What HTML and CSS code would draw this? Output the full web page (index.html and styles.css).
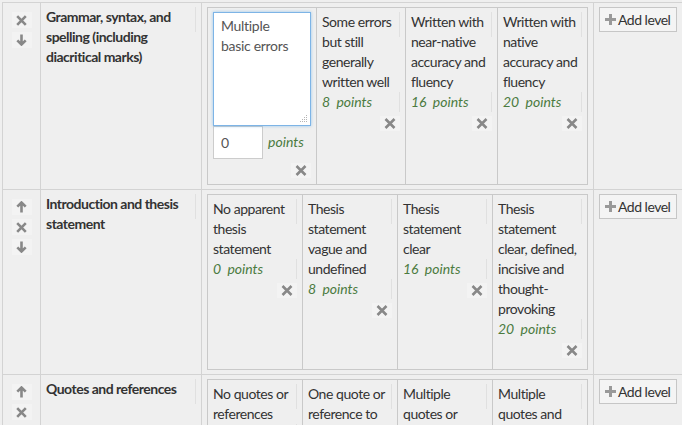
FILE: index.html
```html
<!DOCTYPE html>
<html lang="en">
<head>
<meta charset="utf-8">
<title>Rubric editor</title>
<link rel="stylesheet" href="styles.css">
</head>
<body>
<div class="criteria">

  <div class="criterion">
    <div class="controls">
      <span class="ibtn"><svg width="11" height="11" viewBox="0 0 11 11"><path d="M1.2 1.2L9.8 9.8M9.8 1.2L1.2 9.8" stroke="#888" stroke-width="2.6"/></svg></span>
      <span class="ibtn"><svg width="11" height="12" viewBox="0 0 11 12"><path d="M5.5 0.5V10.5M1.3 6.3L5.5 10.5L9.7 6.3" stroke="#888" stroke-width="2.6" fill="none"/></svg></span>
    </div>
    <div class="description"><div class="desc-text">Grammar, syntax, and spelling (including diacritical marks)</div></div>
    <div class="levels-cell">
      <div class="levels levels-first">
        <div class="level level-editing">
          <div class="def-wrap">
            <textarea class="def-input">Multiple basic errors</textarea>
            <svg class="grip" width="9" height="9" viewBox="0 0 9 9"><g fill="#b5b5b5"><rect x="7" y="1" width="1" height="1"/><rect x="5" y="3" width="1" height="1"/><rect x="7" y="3" width="1" height="1"/><rect x="3" y="5" width="1" height="1"/><rect x="5" y="5" width="1" height="1"/><rect x="7" y="5" width="1" height="1"/><rect x="1" y="7" width="1" height="1"/><rect x="3" y="7" width="1" height="1"/><rect x="5" y="7" width="1" height="1"/><rect x="7" y="7" width="1" height="1"/></g></svg>
          </div>
          <div class="score-edit"><input class="score-input" type="text" value="0"><span class="pts">points</span></div>
          <span class="del"><svg width="12" height="11" viewBox="0 0 12 11"><path d="M1.5 1L10.5 10M10.5 1L1.5 10" stroke="#888" stroke-width="2.6"/></svg></span>
        </div>
        <div class="level">
          <div class="definition">Some errors but still generally written well</div>
          <div class="score"><span class="num">8</span> points</div>
          <span class="del"><svg width="12" height="11" viewBox="0 0 12 11"><path d="M1.5 1L10.5 10M10.5 1L1.5 10" stroke="#888" stroke-width="2.6"/></svg></span>
        </div>
        <div class="level">
          <div class="definition">Written with near-native accuracy and fluency</div>
          <div class="score"><span class="num">16</span> points</div>
          <span class="del"><svg width="12" height="11" viewBox="0 0 12 11"><path d="M1.5 1L10.5 10M10.5 1L1.5 10" stroke="#888" stroke-width="2.6"/></svg></span>
        </div>
        <div class="level">
          <div class="definition">Written with native accuracy and fluency</div>
          <div class="score"><span class="num">20</span> points</div>
          <span class="del"><svg width="12" height="11" viewBox="0 0 12 11"><path d="M1.5 1L10.5 10M10.5 1L1.5 10" stroke="#888" stroke-width="2.6"/></svg></span>
        </div>
      </div>
    </div>
    <div class="addlevel-cell">
      <button class="addlevel" type="button"><svg width="11" height="11" viewBox="0 0 11 11"><path d="M5.5 0V11M0 5.5H11" stroke="#999" stroke-width="3"/></svg><span>Add level</span></button>
    </div>
  </div>

  <div class="criterion">
    <div class="controls">
      <span class="ibtn"><svg width="11" height="12" viewBox="0 0 11 12"><path d="M5.5 11.5V1.5M1.3 5.7L5.5 1.5L9.7 5.7" stroke="#888" stroke-width="2.6" fill="none"/></svg></span>
      <span class="ibtn"><svg width="11" height="11" viewBox="0 0 11 11"><path d="M1.2 1.2L9.8 9.8M9.8 1.2L1.2 9.8" stroke="#888" stroke-width="2.6"/></svg></span>
      <span class="ibtn"><svg width="11" height="12" viewBox="0 0 11 12"><path d="M5.5 0.5V10.5M1.3 6.3L5.5 10.5L9.7 6.3" stroke="#888" stroke-width="2.6" fill="none"/></svg></span>
    </div>
    <div class="description"><div class="desc-text">Introduction and thesis statement</div></div>
    <div class="levels-cell">
      <div class="levels levels-even">
        <div class="level">
          <div class="definition">No apparent thesis statement</div>
          <div class="score"><span class="num">0</span> points</div>
          <span class="del"><svg width="12" height="11" viewBox="0 0 12 11"><path d="M1.5 1L10.5 10M10.5 1L1.5 10" stroke="#888" stroke-width="2.6"/></svg></span>
        </div>
        <div class="level">
          <div class="definition">Thesis statement vague and undefined</div>
          <div class="score"><span class="num">8</span> points</div>
          <span class="del"><svg width="12" height="11" viewBox="0 0 12 11"><path d="M1.5 1L10.5 10M10.5 1L1.5 10" stroke="#888" stroke-width="2.6"/></svg></span>
        </div>
        <div class="level">
          <div class="definition">Thesis statement clear</div>
          <div class="score"><span class="num">16</span> points</div>
          <span class="del"><svg width="12" height="11" viewBox="0 0 12 11"><path d="M1.5 1L10.5 10M10.5 1L1.5 10" stroke="#888" stroke-width="2.6"/></svg></span>
        </div>
        <div class="level">
          <div class="definition">Thesis statement clear, defined, incisive and thought-provoking</div>
          <div class="score"><span class="num">20</span> points</div>
          <span class="del"><svg width="12" height="11" viewBox="0 0 12 11"><path d="M1.5 1L10.5 10M10.5 1L1.5 10" stroke="#888" stroke-width="2.6"/></svg></span>
        </div>
      </div>
    </div>
    <div class="addlevel-cell">
      <button class="addlevel" type="button"><svg width="11" height="11" viewBox="0 0 11 11"><path d="M5.5 0V11M0 5.5H11" stroke="#999" stroke-width="3"/></svg><span>Add level</span></button>
    </div>
  </div>

  <div class="criterion">
    <div class="controls">
      <span class="ibtn"><svg width="11" height="12" viewBox="0 0 11 12"><path d="M5.5 11.5V1.5M1.3 5.7L5.5 1.5L9.7 5.7" stroke="#888" stroke-width="2.6" fill="none"/></svg></span>
      <span class="ibtn"><svg width="11" height="11" viewBox="0 0 11 11"><path d="M1.2 1.2L9.8 9.8M9.8 1.2L1.2 9.8" stroke="#888" stroke-width="2.6"/></svg></span>
    </div>
    <div class="description"><div class="desc-text">Quotes and references</div></div>
    <div class="levels-cell">
      <div class="levels levels-even">
        <div class="level">
          <div class="definition">No quotes or references</div>
          <div class="score"><span class="num">0</span> points</div>
        </div>
        <div class="level">
          <div class="definition">One quote or reference to support argument</div>
          <div class="score"><span class="num">8</span> points</div>
        </div>
        <div class="level">
          <div class="definition">Multiple quotes or references</div>
          <div class="score"><span class="num">16</span> points</div>
        </div>
        <div class="level">
          <div class="definition">Multiple quotes and references, well integrated</div>
          <div class="score"><span class="num">20</span> points</div>
        </div>
      </div>
    </div>
    <div class="addlevel-cell">
      <button class="addlevel" type="button"><svg width="11" height="11" viewBox="0 0 11 11"><path d="M5.5 0V11M0 5.5H11" stroke="#999" stroke-width="3"/></svg><span>Add level</span></button>
    </div>
  </div>

</div>
</body>
</html>
```

FILE: styles.css
```css
* {
  box-sizing: border-box;
}

html, body {
  margin: 0;
  height: 100%;
  overflow: hidden;
  background: #efefef;
}

body {
  font-family: Lato, "Open Sans", sans-serif;
  font-size: 14px;
  line-height: 20px;
  letter-spacing: -0.45px;
  color: #333;
}

.criteria {
  margin: 2px 0 0 2px;
  width: 720px;
  border-top: 1px solid #d3d3d3;
  border-left: 1px solid #d3d3d3;
}

.criterion {
  display: grid;
  grid-template-columns: 38px 161px 392px 129px;
  border-bottom: 1px solid #d3d3d3;
}

.criterion > div {
  border-right: 1px solid #d3d3d3;
}

.controls {
  display: flex;
  flex-direction: column;
  align-items: center;
  gap: 4px;
  padding-top: 9px;
}

.ibtn {
  width: 20px;
  height: 16px;
  display: flex;
  align-items: center;
  justify-content: center;
  background: #f3f3f3;
}

.description {
  padding: 4px 5px;
}

.desc-text {
  position: relative;
  font-weight: bold;
  letter-spacing: -0.5px;
  padding-right: 6px;
}

.desc-text::after,
.definition::after,
.score::after {
  content: "";
  position: absolute;
  right: 0;
  top: 0;
  width: 1px;
  height: 25px;
  background: #e0e0e0;
}

.score::after {
  height: 20px;
}

.levels-cell {
  padding: 4px 5px;
}

.levels {
  display: grid;
  border: 1px solid #c9c9c9;
  width: 381px;
}

.levels-first {
  grid-template-columns: 109px 89px 92px 89px;
}

.levels-even {
  grid-template-columns: 95px 95px 95px 94px;
}

.level {
  display: flex;
  flex-direction: column;
  padding: 4px 5px 11px;
  border-right: 1px solid #c9c9c9;
}

.level:last-child {
  border-right: none;
}

.level-editing {
  padding-bottom: 6px;
}

.definition,
.score {
  position: relative;
}

.score {
  font-style: italic;
  color: #4b7b3f;
  letter-spacing: 0;
}

.num {
  margin-right: 3px;
}

.def-wrap {
  position: relative;
  width: 98px;
  height: 114px;
}

.def-input {
  display: block;
  width: 98px;
  height: 114px;
  margin: 0;
  padding: 3px 12px 3px 7px;
  border: 1px solid #7db4e6;
  border-radius: 0;
  box-shadow: 0 0 3px rgba(82, 168, 236, 0.55);
  background: #fff;
  font-family: Lato, "Open Sans", sans-serif;
  font-size: 14px;
  line-height: 20px;
  letter-spacing: -0.3px;
  color: #555;
  resize: none;
  outline: none;
}

.grip {
  position: absolute;
  right: 3px;
  bottom: 3px;
}

.score-edit {
  display: flex;
  align-items: center;
  gap: 5px;
}

.score-input {
  width: 50px;
  height: 33px;
  margin: 0;
  padding: 0 7px;
  border: 1px solid #ccc;
  border-radius: 0;
  background: #fff;
  font-family: Lato, "Open Sans", sans-serif;
  font-size: 14px;
  color: #555;
}

.pts {
  font-style: italic;
  color: #4b7b3f;
  letter-spacing: 0;
  margin-top: -2px;
}

.del {
  align-self: flex-end;
  margin-top: 4px;
  width: 20px;
  height: 15px;
  display: flex;
  align-items: center;
  justify-content: center;
  background: #f3f3f3;
}

.addlevel-cell {
  padding: 4px 5px;
}

.addlevel {
  display: inline-flex;
  align-items: center;
  gap: 2px;
  height: 25px;
  padding: 0 6px 0 5px;
  margin: 0;
  border: 1px solid #c6c6c6;
  border-radius: 0;
  background: #f4f4f4;
  font-family: Lato, "Open Sans", sans-serif;
  font-size: 14px;
  letter-spacing: -0.5px;
  color: #333;
}
```
